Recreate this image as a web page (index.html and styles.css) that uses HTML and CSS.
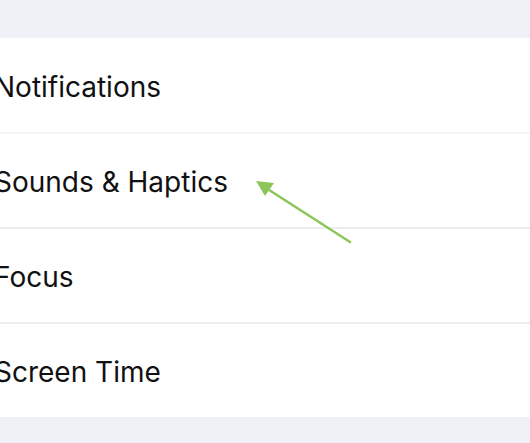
FILE: index.html
```html
<!DOCTYPE html>
<html lang="en">
<head>
  <meta charset="UTF-8">
  <meta name="viewport" content="width=device-width, initial-scale=1.0">
  <title>Settings</title>
  <link rel="stylesheet" href="styles.css">
</head>
<body>
  <div class="settings">
    <ul class="settings-list">
      <li class="settings-row">Notifications</li>
      <li class="settings-row">Sounds &amp; Haptics</li>
      <li class="settings-row">Focus</li>
      <li class="settings-row">Screen Time</li>
    </ul>

    <!-- annotation arrow -->
    <svg class="arrow" width="530" height="443" viewBox="0 0 530 443">
      <line x1="350" y1="242" x2="266" y2="188" stroke="#8cc65a" stroke-width="2.5" stroke-linecap="round"/>
      <polygon points="256,181 274,183 265,196" fill="#8cc65a"/>
    </svg>
  </div>
</body>
</html>
```

FILE: styles.css
```css
body {
  margin: 0;
  padding: 0;
  font-family: Inter, "Noto Sans", sans-serif;
  background-color: #f0f0f7;
}

.settings {
  position: relative;
  height: 443px;
  padding-top: 38px;
  box-sizing: border-box;
  overflow: hidden;
}

.settings-list {
  list-style: none;
  margin: 0;
  padding: 0;
  background-color: #fff;
}

.settings-row {
  height: 95px;
  display: flex;
  align-items: center;
  padding-top: 3px;
  text-indent: -6px;
  font-size: 28px;
  color: #111;
  box-sizing: border-box;
  border-top: 2px solid #ededed;
}

.settings-row:first-child {
  border-top: none;
  height: 94px;
  padding-top: 4px;
}

.settings-row:nth-child(2) {
  border-top-color: #f6f6f6;
}

.arrow {
  position: absolute;
  top: 0;
  left: 0;
  pointer-events: none;
}
```
